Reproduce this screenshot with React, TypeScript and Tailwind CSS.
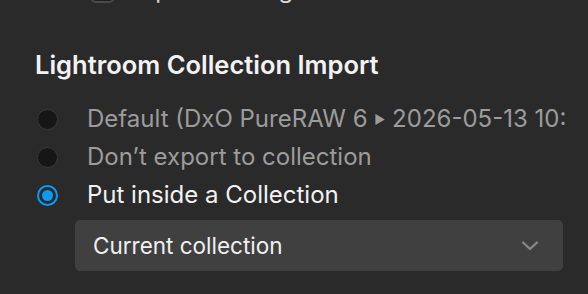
import React from "react";

function Radio({ checked }: { checked?: boolean }) {
  if (checked) {
    return (
      <div className="w-[21px] h-[21px] rounded-full border-[2px] border-[#0a9cf5] flex items-center justify-center shrink-0">
        <div className="w-[11px] h-[11px] rounded-full bg-[#0a9cf5]" />
      </div>
    );
  }
  return <div className="w-[21px] h-[21px] rounded-full bg-[#161616] border border-[#3a3a3a] shrink-0" />;
}

export default function App() {
  return (
    <div
      className="w-[588px] h-[294px] overflow-hidden bg-[#2a2a2a] relative"
      style={{ fontFamily: "Inter, 'Noto Sans', sans-serif" }}
    >
      <div className="flex items-center h-[26px] mt-[-23px] pl-[90px] gap-[22px]">
        <div className="w-[25px] h-[25px] rounded-[6px] border-2 border-[#4a4a4a] bg-[#1e1e1e] shrink-0" />
        <span className="text-[24px] text-[#d8d8d8] whitespace-nowrap">Open with Lightroom Classic (?)</span>
      </div>
      <div className="pl-[35px] mt-[45px] h-[34px] flex items-center">
        <span className="text-[25.5px] font-semibold text-[#f2f2f2] whitespace-nowrap">
          Lightroom Collection Import
        </span>
      </div>
      <div className="mt-[18px] flex flex-col w-[565px] overflow-hidden">
        <div className="flex items-center h-[38px] pl-[37px] gap-[29px]">
          <Radio />
          <span className="text-[24px] text-[#9c9c9c] whitespace-nowrap">
            Default (DxO PureRAW 6 <span className="text-[12px] align-middle">▶</span> 2026-05-13 10:40
          </span>
        </div>
        <div className="flex items-center h-[38px] pl-[37px] gap-[29px]">
          <Radio />
          <span className="text-[24px] text-[#9c9c9c] whitespace-nowrap">Don’t export to collection</span>
        </div>
        <div className="flex items-center h-[38px] pl-[37px] gap-[29px]">
          <Radio checked />
          <span className="text-[24px] text-[#f2f2f2] whitespace-nowrap">Put inside a Collection</span>
        </div>
      </div>
      <div className="ml-[75px] mt-[6px] w-[488px] h-[51px] rounded-[5px] bg-[#404040] flex items-center justify-between pl-[18px] pr-[24px]">
        <span className="text-[22.5px] text-[#f0f0f0] whitespace-nowrap">Current collection</span>
        <svg width="18" height="10" viewBox="0 0 18 10" fill="none">
          <path d="M2 1.5 L9 8 L16 1.5" stroke="#8a8a8a" strokeWidth="2.2" strokeLinecap="round" strokeLinejoin="round" />
        </svg>
      </div>
    </div>
  );
}
